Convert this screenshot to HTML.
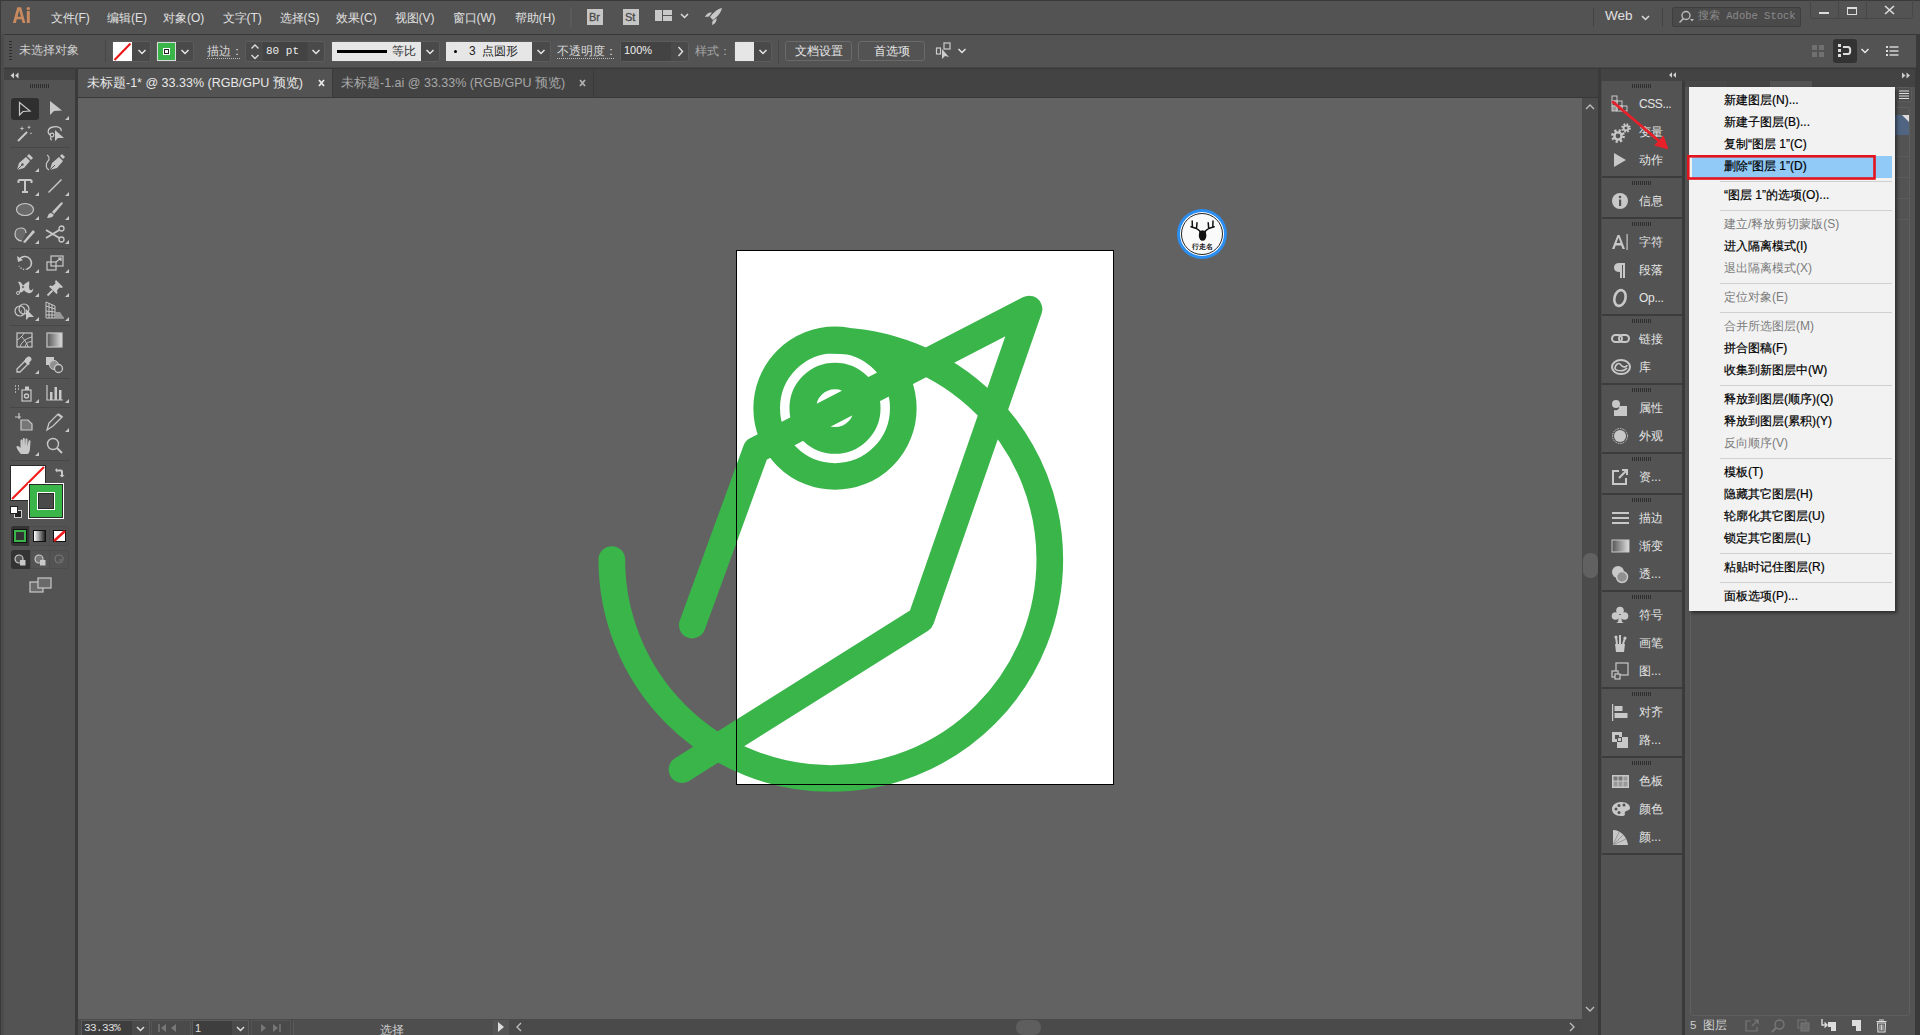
<!DOCTYPE html>
<html><head><meta charset="utf-8">
<style>
*{box-sizing:border-box;margin:0;padding:0}
html,body{width:1920px;height:1035px;overflow:hidden;background:#3a3a3a;font-family:"Liberation Sans",sans-serif;color:#dcdcdc;font-size:12px}
.a{position:absolute}
.t{position:absolute;white-space:nowrap;line-height:1}
svg{position:absolute;overflow:visible}
</style></head><body>
<!-- MENU BAR -->
<div class="a" style="left:0;top:0;width:1920px;height:34px;background:#535353;border-top:1px solid #3a3a3a;border-left:1px solid #3a3a3a"></div>
<div id="menubar">
<svg style="left:0;top:0" width="40" height="30"><path fill-rule="evenodd" fill="#c98a60" d="M12.9 23 L17.3 7.2 L21.1 7.2 L25.4 23 L22.6 23 L21.6 19.3 L16.8 19.3 L15.8 23Z M17.5 16.7 L20.9 16.7 L19.2 10.2Z"/><rect x="26.8" y="11" width="3" height="12" fill="#c98a60"/><circle cx="28.3" cy="8.6" r="1.7" fill="#c98a60"/></svg>
<div class="t" style="left:50.5px;top:12px;font-size:12px;color:#e0e0e0">文件(F)</div>
<div class="t" style="left:107px;top:12px;font-size:12px;color:#e0e0e0">编辑(E)</div>
<div class="t" style="left:163px;top:12px;font-size:12px;color:#e0e0e0">对象(O)</div>
<div class="t" style="left:222.5px;top:12px;font-size:12px;color:#e0e0e0">文字(T)</div>
<div class="t" style="left:279.5px;top:12px;font-size:12px;color:#e0e0e0">选择(S)</div>
<div class="t" style="left:336px;top:12px;font-size:12px;color:#e0e0e0">效果(C)</div>
<div class="t" style="left:394.5px;top:12px;font-size:12px;color:#e0e0e0">视图(V)</div>
<div class="t" style="left:452.5px;top:12px;font-size:12px;color:#e0e0e0">窗口(W)</div>
<div class="t" style="left:514.5px;top:12px;font-size:12px;color:#e0e0e0">帮助(H)</div>
<div class="a" style="left:570px;top:7px;width:2px;height:20px;background:#5a5a5a"></div>
<div class="a" style="left:587px;top:9px;width:16px;height:16px;background:#c6c6c6"></div><div class="t" style="left:589px;top:12px;font-size:11px;color:#4a4a4a;-webkit-text-stroke:0.3px #4a4a4a">Br</div>
<div class="a" style="left:623px;top:9px;width:16px;height:16px;background:#c6c6c6"></div><div class="t" style="left:625px;top:12px;font-size:11px;color:#4a4a4a;-webkit-text-stroke:0.3px #4a4a4a">St</div>
<div class="a" style="left:655px;top:10px;width:7px;height:11px;background:#c8c8c8"></div><div class="a" style="left:663px;top:10px;width:9px;height:5px;background:#c8c8c8"></div><div class="a" style="left:663px;top:16px;width:9px;height:5px;background:#c8c8c8"></div>
<svg style="left:680px;top:13px" width="9" height="6"><path d="M1 1 L4.5 4.5 L8 1" stroke="#ddd" stroke-width="1.5" fill="none"/></svg>
<svg style="left:703px;top:7px" width="22" height="20"><path d="M19 1 C14 2 10 6 7 10 L10 13 C14 10 18 6 19 1Z" fill="#c8c8c8"/><path d="M2 10 C3 7 6 5 9 5.5 L6 9.5Z" fill="#c8c8c8"/><path d="M9 18 C12 17 14 14 13.5 11 L9.5 14Z" fill="#c8c8c8"/></svg>
<div class="a" style="left:1593px;top:8px;width:1px;height:19px;background:#444"></div>
<div class="t" style="left:1605px;top:9px;font-size:13.5px;color:#e0e0e0">Web</div>
<svg style="left:1641px;top:15px" width="9" height="6"><path d="M1 1 L4.5 4.5 L8 1" stroke="#ddd" stroke-width="1.5" fill="none"/></svg>
<div class="a" style="left:1662px;top:8px;width:1px;height:19px;background:#444"></div>
<div class="a" style="left:1672px;top:7px;width:129px;height:20px;background:#4a4a4a;border:1px solid #3e3e3e;border-radius:2px"></div>
<svg style="left:1677px;top:9px" width="20" height="16"><circle cx="9" cy="6.5" r="4" stroke="#bbb" stroke-width="1.4" fill="none"/><path d="M6.5 9.5 L2.5 13.5" stroke="#bbb" stroke-width="1.6"/><path d="M13 10 L17 10 L15 12.5Z" fill="#bbb"/></svg>
<div class="t" style="left:1698px;top:11px;font-size:10.5px;color:#8a8a8a;font-family:'Liberation Mono',monospace">搜索 Adobe Stock</div>
<div class="a" style="left:1810px;top:-2px;width:103px;height:21px;border:1px solid #474747;border-radius:3px"></div>
<div class="a" style="left:1838px;top:0;width:1px;height:19px;background:#474747"></div>
<div class="a" style="left:1866px;top:0;width:1px;height:19px;background:#474747"></div>
<div class="a" style="left:1819px;top:12px;width:10px;height:2px;background:#ddd"></div>
<div class="a" style="left:1847px;top:7px;width:10px;height:8px;border:1px solid #ddd;border-top:2px solid #ddd"></div>
<svg style="left:1884px;top:5px" width="11" height="10"><path d="M1 1 L10 9 M10 1 L1 9" stroke="#ddd" stroke-width="1.6"/></svg>
</div>
<!-- CONTROL BAR -->
<div class="a" style="left:1px;top:34px;width:3px;height:1001px;background:#4c4c4c"></div>
<div class="a" style="left:4px;top:34px;width:1912px;height:34px;background:#535353;border-top:1px solid #383838"></div>
<div id="controlbar">
<div class="a" style="left:9px;top:41px;width:3px;height:20px;background:repeating-linear-gradient(#2e2e2e 0 1px,transparent 1px 3px)"></div>
<div class="t" style="left:19px;top:44px;font-size:12px;color:#cfcfcf">未选择对象</div>
<div class="a" style="left:105px;top:40px;width:1px;height:22px;background:#474747"></div>
<div class="a" style="left:112px;top:41px;width:39px;height:21px;background:#4a4a4a;border:1px solid #5c5c5c;border-radius:3px"></div>
<div class="a" style="left:113px;top:42px;width:19px;height:19px;background:#fff"></div>
<svg style="left:113px;top:42px" width="19" height="19"><path d="M1.5 18 L17.5 1.5" stroke="#e81313" stroke-width="2"/></svg>
<svg style="left:137px;top:49px" width="10" height="7"><path d="M1.5 1 L5 4.5 L8.5 1" stroke="#e6e6e6" stroke-width="1.5" fill="none"/></svg>
<div class="a" style="left:156px;top:41px;width:38px;height:21px;background:#4a4a4a;border:1px solid #5c5c5c;border-radius:3px"></div>
<div class="a" style="left:157px;top:42px;width:19px;height:19px;background:#39b54a;border:1px solid #d8d8d8"></div>
<div class="a" style="left:163px;top:48px;width:7px;height:7px;background:#fff"></div>
<div class="a" style="left:164px;top:49px;width:5px;height:5px;background:#fff;border:1px solid #222"></div>
<svg style="left:180px;top:49px" width="10" height="7"><path d="M1.5 1 L5 4.5 L8.5 1" stroke="#e6e6e6" stroke-width="1.5" fill="none"/></svg>
<div class="t" style="left:207px;top:45px;font-size:12px;color:#d6d6d6">描边：</div>
<div class="a" style="left:207px;top:58px;width:33px;height:1px;border-top:1px dotted #bbb"></div>
<div class="a" style="left:245px;top:41px;width:80px;height:21px;background:#4a4a4a;border:1px solid #5c5c5c;border-radius:3px"></div>
<div class="a" style="left:263px;top:42px;width:44px;height:19px;background:#434343"></div>
<div class="a" style="left:307px;top:42px;width:1px;height:19px;background:#474747"></div>
<svg style="left:250px;top:43px" width="10" height="18"><path d="M1.5 5.5 L5 2 L8.5 5.5 M1.5 12 L5 15.5 L8.5 12" stroke="#ddd" stroke-width="1.4" fill="none"/></svg>
<div class="t" style="left:266px;top:46px;font-size:11px;color:#eee;font-family:'Liberation Mono',monospace">80 pt</div>
<svg style="left:311px;top:49px" width="10" height="7"><path d="M1.5 1 L5 4.5 L8.5 1" stroke="#e6e6e6" stroke-width="1.5" fill="none"/></svg>
<div class="a" style="left:332px;top:41px;width:108px;height:21px;background:#4a4a4a;border:1px solid #5c5c5c;border-radius:3px"></div>
<div class="a" style="left:332px;top:42px;width:89px;height:19px;background:#e6e6e6"></div>
<div class="a" style="left:337px;top:50px;width:50px;height:3px;background:#000"></div>
<div class="t" style="left:392px;top:45px;font-size:12px;color:#333">等比</div>
<svg style="left:425px;top:49px" width="10" height="7"><path d="M1.5 1 L5 4.5 L8.5 1" stroke="#e6e6e6" stroke-width="1.5" fill="none"/></svg>
<div class="a" style="left:446px;top:41px;width:105px;height:21px;background:#4a4a4a;border:1px solid #5c5c5c;border-radius:3px"></div>
<div class="a" style="left:446px;top:42px;width:86px;height:19px;background:#e6e6e6"></div>
<div class="a" style="left:454px;top:50px;width:3px;height:3px;background:#000;border-radius:50%"></div>
<div class="t" style="left:469px;top:45px;font-size:12px;color:#222">3&nbsp;&nbsp;点圆形</div>
<svg style="left:536px;top:49px" width="10" height="7"><path d="M1.5 1 L5 4.5 L8.5 1" stroke="#e6e6e6" stroke-width="1.5" fill="none"/></svg>
<div class="t" style="left:557px;top:45px;font-size:12px;color:#d6d6d6">不透明度：</div>
<div class="a" style="left:557px;top:58px;width:57px;height:1px;border-top:1px dotted #bbb"></div>
<div class="a" style="left:620px;top:41px;width:69px;height:21px;background:#4a4a4a;border:1px solid #5c5c5c;border-radius:3px"></div>
<div class="a" style="left:621px;top:42px;width:50px;height:19px;background:#434343"></div>
<div class="t" style="left:624px;top:45px;font-size:11px;color:#eee">100%</div>
<svg style="left:677px;top:46px" width="7" height="11"><path d="M1.5 1 L5.5 5.5 L1.5 10" stroke="#ddd" stroke-width="1.5" fill="none"/></svg>
<div class="t" style="left:695px;top:45px;font-size:12px;color:#a8a8a8">样式：</div>
<div class="a" style="left:734px;top:41px;width:38px;height:21px;background:#4a4a4a;border:1px solid #5c5c5c;border-radius:3px"></div>
<div class="a" style="left:735px;top:42px;width:19px;height:19px;background:#e6e6e6"></div>
<svg style="left:758px;top:49px" width="10" height="7"><path d="M1.5 1 L5 4.5 L8.5 1" stroke="#e6e6e6" stroke-width="1.5" fill="none"/></svg>
<div class="a" style="left:778px;top:39px;width:1px;height:25px;background:#474747"></div>
<div class="a" style="left:785px;top:41px;width:67px;height:20px;border:1px solid #6a6a6a;border-radius:3px"></div>
<div class="t" style="left:795px;top:45px;font-size:12px;color:#e6e6e6">文档设置</div>
<div class="a" style="left:858px;top:41px;width:67px;height:20px;border:1px solid #6a6a6a;border-radius:3px"></div>
<div class="t" style="left:874px;top:45px;font-size:12px;color:#e6e6e6">首选项</div>
<svg style="left:935px;top:42px" width="18" height="18"><rect x="9" y="1" width="6" height="6" stroke="#ccc" stroke-width="1.2" fill="none"/><rect x="1.5" y="6" width="4" height="6" stroke="#ccc" stroke-width="1.2" fill="none"/><path d="M7 7 L7 17 L10 14 L14 15Z" fill="#ccc"/></svg>
<svg style="left:957px;top:48px" width="10" height="7"><path d="M1.5 1 L5 4.5 L8.5 1" stroke="#e6e6e6" stroke-width="1.5" fill="none"/></svg>
<svg style="left:1811px;top:44px" width="15" height="14"><rect x="1" y="1" width="5" height="5" fill="#707070"/><rect x="8" y="1" width="5" height="5" fill="#707070"/><rect x="1" y="8" width="5" height="5" fill="#707070"/><rect x="8" y="8" width="5" height="5" fill="#707070"/></svg>
<div class="a" style="left:1833px;top:39px;width:24px;height:24px;background:#333;border-radius:3px"></div>
<svg style="left:1838px;top:44px" width="16" height="14"><rect x="0" y="0" width="3" height="3" fill="#ddd"/><rect x="0" y="5" width="3" height="3" fill="#ddd"/><rect x="0" y="10" width="3" height="3" fill="#ddd"/><path d="M5 3 L10 3 C13 3 13 10 10 10 L5 10" stroke="#ddd" stroke-width="2" fill="none"/></svg>
<svg style="left:1860px;top:48px" width="10" height="7"><path d="M1.5 1 L5 4.5 L8.5 1" stroke="#e6e6e6" stroke-width="1.5" fill="none"/></svg>
<svg style="left:1886px;top:46px" width="13" height="10"><rect x="0" y="0" width="2" height="2" fill="#ddd"/><rect x="0" y="4" width="2" height="2" fill="#ddd"/><rect x="0" y="8" width="2" height="2" fill="#ddd"/><rect x="3.5" y="0.3" width="9" height="1.4" fill="#ddd"/><rect x="3.5" y="4.3" width="9" height="1.4" fill="#ddd"/><rect x="3.5" y="8.3" width="9" height="1.4" fill="#ddd"/></svg>
</div>
<!-- LEFT TOOLS -->
<div class="a" style="left:4px;top:68px;width:71px;height:967px;background:#535353"></div>
<div class="a" style="left:4px;top:68px;width:71px;height:12px;background:#434343"></div>
<div class="a" style="left:75px;top:68px;width:3px;height:967px;background:#3a3a3a"></div>
<div id="tools">
<div class="a" style="left:23px;top:73px;width:0;height:0"></div><svg style="left:10px;top:72px" width="10" height="7"><path d="M4 0.5 L0.5 3.5 L4 6.5Z M8.5 0.5 L5 3.5 L8.5 6.5Z" fill="#d0d0d0"/></svg>
<div class="a" style="left:30px;top:84px;width:19px;height:4px;background:repeating-linear-gradient(90deg,#2e2e2e 0 1px,transparent 1px 2px)"></div>
<div class="a" style="left:11px;top:98px;width:28px;height:22px;background:#2f2f2f;border-radius:3px"></div>
<svg style="left:18px;top:101px" width="14" height="16"><path d="M1.5 1.5 L1.5 14 L5 10.5 L12 10Z" stroke="#c8c8c8" stroke-width="1.2" fill="none" stroke-linejoin="miter"/></svg>
<svg style="left:49px;top:100px" width="14" height="16"><path d="M1 1 L1 15 L5 11 L13 10.5Z" fill="#c8c8c8"/></svg>
<svg style="left:65px;top:116px" width="4" height="4"><path d="M4 0 L4 4 L0 4Z" fill="#c8c8c8"/></svg>
<svg style="left:16px;top:124px" width="18" height="18"><path d="M2 17 L11 8" stroke="#c8c8c8" stroke-width="2"/><path d="M6 2 L6.6 4 L8.5 4.5 L6.6 5 L6 7 L5.4 5 L3.5 4.5 L5.4 4Z M13 1 L13.5 2.8 L15 3.3 L13.5 3.8 L13 5.5 L12.5 3.8 L11 3.3 L12.5 2.8Z M15 8 L15.4 9 L16.5 9.3 L15.4 9.6 L15 10.6 L14.6 9.6 L13.5 9.3 L14.6 9Z" fill="#c8c8c8"/></svg>
<svg style="left:46px;top:125px" width="19" height="17"><path d="M5 10 C1 9 1 3 7 2 C12 1 16 3 15 6" stroke="#c8c8c8" stroke-width="1.3" fill="none"/><circle cx="6" cy="10" r="1.8" stroke="#c8c8c8" stroke-width="1.2" fill="none"/><path d="M5 12 C4 14 5 15 6 15" stroke="#c8c8c8" stroke-width="1.2" fill="none"/><path d="M9 5 L9 16 L12 13 L18 13Z" fill="#c8c8c8"/></svg>
<div class="a" style="left:10px;top:147px;width:60px;height:1px;background:#474747"></div>
<svg style="left:16px;top:153px" width="18" height="18"><path d="M1 17 L3 10 L10 4 L14 8 L8 15Z" fill="#c8c8c8"/><path d="M11 3 L13 1 L17 5 L15 7Z" fill="#c8c8c8"/><path d="M1 17 L6 12" stroke="#555" stroke-width="1"/><circle cx="6.5" cy="11.5" r="1.2" fill="#555"/></svg>
<svg style="left:35px;top:168px" width="4" height="4"><path d="M4 0 L4 4 L0 4Z" fill="#c8c8c8"/></svg>
<svg style="left:45px;top:153px" width="20" height="18"><path d="M5 17 L7 10 L14 4 L18 8 L12 15Z" fill="#c8c8c8"/><path d="M15 3 L17 1 L20 4 L18 6Z" fill="#c8c8c8"/><path d="M5 17 L10 12" stroke="#555" stroke-width="1"/><path d="M4 17 C0 15 1 10 3 8 C5 6 4 3 2 2" stroke="#c8c8c8" stroke-width="1.1" fill="none"/></svg>
<svg style="left:17px;top:178px" width="16" height="16"><path d="M1.5 2 L14.5 2 M8 2 L8 14 M5 14 L11 14 M1.5 2 L1.5 5 M14.5 2 L14.5 5" stroke="#c8c8c8" stroke-width="2" fill="none"/></svg>
<svg style="left:35px;top:192px" width="4" height="4"><path d="M4 0 L4 4 L0 4Z" fill="#c8c8c8"/></svg>
<svg style="left:47px;top:178px" width="16" height="16"><path d="M1.5 14.5 L14.5 1.5" stroke="#c8c8c8" stroke-width="1.4"/></svg>
<svg style="left:65px;top:192px" width="4" height="4"><path d="M4 0 L4 4 L0 4Z" fill="#c8c8c8"/></svg>
<svg style="left:15px;top:202px" width="20" height="15"><ellipse cx="10" cy="7.5" rx="8.5" ry="6" stroke="#c8c8c8" stroke-width="1.2" fill="#6a6a6a"/></svg>
<svg style="left:35px;top:216px" width="4" height="4"><path d="M4 0 L4 4 L0 4Z" fill="#c8c8c8"/></svg>
<svg style="left:46px;top:201px" width="18" height="18"><path d="M6 11 L15 1.5 C16.5 1 17 1.5 16.5 3 L8 13Z" fill="#c8c8c8"/><path d="M5 12 C2 12 2 16 1 17 C4 17 8 16 7.5 13.5Z" fill="#c8c8c8"/></svg>
<svg style="left:65px;top:216px" width="4" height="4"><path d="M4 0 L4 4 L0 4Z" fill="#c8c8c8"/></svg>
<svg style="left:14px;top:225px" width="22" height="18"><path d="M8 16 C4 16 1 13 1 9 C1 5 4 3 7 3 C10 3 12 5 12 8" stroke="#c8c8c8" stroke-width="1.2" fill="#6a6a6a"/><path d="M9 17 L19 5 L21 7 L11 18Z" fill="#c8c8c8"/></svg>
<svg style="left:35px;top:240px" width="4" height="4"><path d="M4 0 L4 4 L0 4Z" fill="#c8c8c8"/></svg>
<svg style="left:45px;top:225px" width="20" height="18"><path d="M1 5 L16 14 M1 13 L16 4" stroke="#c8c8c8" stroke-width="1.8"/><circle cx="16.5" cy="3.5" r="2.5" stroke="#c8c8c8" stroke-width="1.3" fill="#555"/><circle cx="16.5" cy="14.5" r="2.5" stroke="#c8c8c8" stroke-width="1.3" fill="#555"/></svg>
<svg style="left:65px;top:240px" width="4" height="4"><path d="M4 0 L4 4 L0 4Z" fill="#c8c8c8"/></svg>
<div class="a" style="left:10px;top:248px;width:60px;height:1px;background:#474747"></div>
<svg style="left:16px;top:254px" width="18" height="18"><path d="M3 6 C5 2 11 1 14 5 C17 9 15 14 11 15" stroke="#c8c8c8" stroke-width="1.5" fill="none"/><path d="M11 15 C8 16 5 15 3 12" stroke="#c8c8c8" stroke-width="1.3" fill="none" stroke-dasharray="1.3 1.5"/><path d="M1 2 L2 8 L7 6Z" fill="#c8c8c8"/></svg>
<svg style="left:35px;top:269px" width="4" height="4"><path d="M4 0 L4 4 L0 4Z" fill="#c8c8c8"/></svg>
<svg style="left:46px;top:254px" width="18" height="17"><rect x="1" y="8" width="9" height="8" stroke="#c8c8c8" stroke-width="1.2" fill="none"/><rect x="5" y="2" width="12" height="10" stroke="#c8c8c8" stroke-width="1.2" fill="none"/><path d="M10 8 L15 4 M12 4 L15 4 L15 7" stroke="#c8c8c8" stroke-width="1.2" fill="none"/></svg>
<svg style="left:65px;top:269px" width="4" height="4"><path d="M4 0 L4 4 L0 4Z" fill="#c8c8c8"/></svg>
<svg style="left:15px;top:278px" width="20" height="17"><path d="M4 14 C6 10 5 7 3 4 C5 3 7 5 8 8 C11 4 12 5 14 3 C15 6 13 9 15 12 C17 13 18 11 18 10 C19 13 16 16 13 15 C10 14 9 12 9 12 C8 14 6 15 4 14Z" fill="#c8c8c8"/><circle cx="3" cy="15" r="1.5" stroke="#c8c8c8" fill="#555"/><circle cx="8" cy="9" r="1.5" stroke="#c8c8c8" fill="#555"/></svg>
<svg style="left:35px;top:293px" width="4" height="4"><path d="M4 0 L4 4 L0 4Z" fill="#c8c8c8"/></svg>
<svg style="left:46px;top:279px" width="18" height="17"><path d="M10 1 L17 8 L15.5 9 L13.5 8.5 L11 11.5 L11.5 14 L10.5 15 L3 7.5 L4 6.5 L6.5 7 L9.5 4.5 L9 2.5Z" fill="#c8c8c8"/><path d="M6.5 11.5 L1.5 16.5" stroke="#c8c8c8" stroke-width="1.8"/></svg>
<svg style="left:65px;top:293px" width="4" height="4"><path d="M4 0 L4 4 L0 4Z" fill="#c8c8c8"/></svg>
<svg style="left:14px;top:302px" width="22" height="18"><circle cx="6" cy="9" r="5" stroke="#c8c8c8" stroke-width="1.2" fill="none"/><circle cx="10" cy="7" r="5" stroke="#c8c8c8" stroke-width="1.2" fill="none"/><path d="M5 9 L9 9" stroke="#c8c8c8" stroke-dasharray="1 1"/><path d="M12 7 L12 18 L15 15 L20 15Z" fill="#c8c8c8"/></svg>
<svg style="left:35px;top:317px" width="4" height="4"><path d="M4 0 L4 4 L0 4Z" fill="#c8c8c8"/></svg>
<svg style="left:45px;top:301px" width="20" height="18"><path d="M1 1 L1 17 L19 17 M1 1 L10 5 L10 17 M1 5 L10 8 M1 10 L10 11 M1 14 L10 14 M4 2 L4 17 M7 3.5 L7 17" stroke="#c8c8c8" stroke-width="1" fill="none"/><path d="M10 11 L15 11 L19 17 L10 17Z" fill="#9a9a9a"/></svg>
<svg style="left:65px;top:317px" width="4" height="4"><path d="M4 0 L4 4 L0 4Z" fill="#c8c8c8"/></svg>
<div class="a" style="left:10px;top:325px;width:60px;height:1px;background:#474747"></div>
<svg style="left:16px;top:332px" width="17" height="16"><rect x="1" y="1" width="15" height="14" stroke="#c8c8c8" stroke-width="1.2" fill="none"/><path d="M1 8 C5 6 8 2 8 1 M4 15 C5 10 11 6 16 5 M9 15 C10 11 13 9 16 10 M5 4 C8 7 11 11 12 15" stroke="#c8c8c8" stroke-width="1" fill="none"/></svg>
<svg style="left:46px;top:332px" width="17" height="16"><defs><linearGradient id="g1"><stop offset="0" stop-color="#555"/><stop offset="1" stop-color="#ddd"/></linearGradient></defs><rect x="1" y="1" width="15" height="14" stroke="#c8c8c8" stroke-width="1.2" fill="url(#g1)"/></svg>
<svg style="left:15px;top:356px" width="18" height="18"><path d="M2 16 L2 13 L10 5 L13 8 L5 16Z" stroke="#c8c8c8" stroke-width="1.3" fill="none"/><path d="M10 3 L13 0.5 C15 0 17 2 16.5 4 L14 7 L15 8 L13 9 L9 5 L10 4Z" fill="#c8c8c8"/></svg>
<svg style="left:35px;top:370px" width="4" height="4"><path d="M4 0 L4 4 L0 4Z" fill="#c8c8c8"/></svg>
<svg style="left:45px;top:356px" width="19" height="18"><rect x="1" y="1" width="8" height="8" fill="#c8c8c8"/><circle cx="9" cy="9" r="4.5" fill="#909090" stroke="#c8c8c8" stroke-width="1"/><circle cx="13.5" cy="12.5" r="4" stroke="#c8c8c8" stroke-width="1.3" fill="#555"/></svg>
<div class="a" style="left:10px;top:378px;width:60px;height:1px;background:#474747"></div>
<svg style="left:14px;top:385px" width="20" height="16"><path d="M1 1 L2 1 M4 1 L5 1 M1 4 L2 4 M4 4 L5 4 M1 7 L2 7" stroke="#c8c8c8" stroke-width="1.6"/><rect x="8" y="5" width="9" height="11" stroke="#c8c8c8" stroke-width="1.2" fill="none"/><rect x="11" y="1.5" width="4" height="3.5" fill="#c8c8c8"/><circle cx="12.5" cy="11" r="2" stroke="#c8c8c8" stroke-width="1.4" fill="none"/></svg>
<svg style="left:35px;top:399px" width="4" height="4"><path d="M4 0 L4 4 L0 4Z" fill="#c8c8c8"/></svg>
<svg style="left:46px;top:385px" width="18" height="16"><path d="M1 0 L1 15 L17 15" stroke="#c8c8c8" stroke-width="1.2" fill="none"/><rect x="4" y="7" width="2.5" height="8" fill="#c8c8c8"/><rect x="8.5" y="2" width="2.5" height="13" fill="#c8c8c8"/><rect x="13" y="5" width="2.5" height="10" fill="#c8c8c8"/></svg>
<svg style="left:65px;top:399px" width="4" height="4"><path d="M4 0 L4 4 L0 4Z" fill="#c8c8c8"/></svg>
<div class="a" style="left:10px;top:407px;width:60px;height:1px;background:#474747"></div>
<svg style="left:15px;top:413px" width="19" height="18"><path d="M4 0 L4 6 M0 4 L6 4" stroke="#c8c8c8" stroke-width="1.2"/><path d="M6 7 L13 7 L17 11 L17 17 L6 17Z" stroke="#c8c8c8" stroke-width="1.2" fill="#777"/></svg>
<svg style="left:46px;top:413px" width="18" height="18"><path d="M1 17 L3 10 L12 1 L16 4 L7 13Z" stroke="#c8c8c8" stroke-width="1.3" fill="none"/><path d="M11 2 L13 0.5 L17 3.5 L15.5 5Z" fill="#c8c8c8"/></svg>
<svg style="left:65px;top:428px" width="4" height="4"><path d="M4 0 L4 4 L0 4Z" fill="#c8c8c8"/></svg>
<svg style="left:16px;top:437px" width="18" height="18"><path d="M5 17 C3 15 0.5 11 0.5 10 C0.5 9 2 8.5 3 9.5 L4.5 11 L4.5 3.5 C4.5 2.3 6.5 2.3 6.5 3.5 L6.5 9 L6.8 2 C6.8 0.8 8.8 0.8 8.8 2 L9 9 L9.5 2.5 C9.5 1.3 11.5 1.3 11.5 2.5 L11.5 9.5 L12.5 4 C12.7 2.8 14.5 3 14.5 4.2 L14 11 C14 14 13 16 12 17Z" fill="#c8c8c8"/></svg>
<svg style="left:35px;top:452px" width="4" height="4"><path d="M4 0 L4 4 L0 4Z" fill="#c8c8c8"/></svg>
<svg style="left:46px;top:437px" width="17" height="18"><circle cx="7" cy="7" r="5.5" stroke="#c8c8c8" stroke-width="1.4" fill="none"/><path d="M11 11 L16 16" stroke="#c8c8c8" stroke-width="2"/></svg>
<div class="a" style="left:10px;top:460px;width:60px;height:1px;background:#474747"></div>
<div class="a" style="left:10px;top:465px;width:36px;height:36px;background:#fff;border:1px solid #2a2a2a"></div>
<svg style="left:11px;top:466px" width="34" height="34"><path d="M1 33 L33 1" stroke="#f21a1a" stroke-width="2.2"/></svg>
<div class="a" style="left:28px;top:483px;width:36px;height:36px;background:#fff;padding:1px"><div style="width:34px;height:34px;background:#39b54a;border:1px solid #2a2a2a;position:relative"><div style="position:absolute;left:7px;top:7px;width:18px;height:18px;border:1px solid #fff;background:#2a2a2a"><div style="margin:1px;width:14px;height:14px;background:#4a4a4a"></div></div></div></div>
<svg style="left:54px;top:467px" width="11" height="11"><path d="M1 3 L3 1 L3 2.5 L7 2.5 C8.5 2.5 9 3.5 9 5 L9 8 L10.5 8 L8 10.5 L5.5 8 L7 8 L7 5 C7 4.5 6.8 4.5 6 4.5 L3 4.5 L3 5.5Z" fill="#c8c8c8"/></svg>
<div class="a" style="left:10px;top:506px;width:12px;height:12px"><div class="a" style="left:4px;top:4px;width:8px;height:8px;background:#222;border:1px solid #ccc"></div><div class="a" style="left:0;top:0;width:8px;height:8px;background:#fff;border:1px solid #222"></div></div>
<div class="a" style="left:11px;top:526px;width:58px;height:20px;border:1px solid #4c4c4c;border-radius:3px"></div>
<div class="a" style="left:11px;top:526px;width:18px;height:20px;background:#333;border-radius:3px 0 0 3px"></div>
<div class="a" style="left:29px;top:527px;width:1px;height:18px;background:#4c4c4c"></div><div class="a" style="left:49px;top:527px;width:1px;height:18px;background:#4c4c4c"></div>
<div class="a" style="left:14px;top:530px;width:12px;height:12px;border:2px solid #39b54a;background:#333;outline:1px solid #111"></div>
<div class="a" style="left:33px;top:530px;width:13px;height:12px;background:linear-gradient(90deg,#fff,#222);border:1px solid #111"></div>
<div class="a" style="left:53px;top:530px;width:13px;height:12px;background:#fff;border:1px solid #111;overflow:hidden"></div><svg style="left:54px;top:531px" width="11" height="10"><path d="M0 10 L11 0" stroke="#f21a1a" stroke-width="2.5"/></svg>
<div class="a" style="left:11px;top:550px;width:58px;height:19px;border:1px solid #4c4c4c;border-radius:3px"></div>
<div class="a" style="left:11px;top:550px;width:19px;height:19px;background:#333;border-radius:3px 0 0 3px"></div>
<div class="a" style="left:30px;top:551px;width:1px;height:17px;background:#4c4c4c"></div><div class="a" style="left:49px;top:551px;width:1px;height:17px;background:#4c4c4c"></div>
<svg style="left:14px;top:554px" width="12" height="12"><circle cx="5" cy="5" r="4" stroke="#c8c8c8" stroke-width="1.2" fill="#555"/><rect x="6" y="6" width="5.5" height="5.5" fill="#c8c8c8"/></svg>
<svg style="left:34px;top:554px" width="12" height="12"><circle cx="5" cy="5" r="4" stroke="#c8c8c8" stroke-width="1.2" fill="#777"/><rect x="6" y="6" width="5.5" height="5.5" fill="#c8c8c8"/></svg>
<svg style="left:54px;top:554px" width="10" height="10"><circle cx="5" cy="5" r="4" stroke="#777" stroke-width="1.2" fill="none"/><path d="M5 5 L9 5 L9 9 L5 9Z" fill="#666"/></svg>
<svg style="left:29px;top:577px" width="23" height="17"><rect x="1" y="5" width="13" height="10" stroke="#c8c8c8" stroke-width="1.2" fill="#6a6a6a"/><rect x="9" y="1" width="13" height="10" stroke="#c8c8c8" stroke-width="1.2" fill="#6a6a6a"/></svg>
</div>
<!-- DOC TABS -->
<div class="a" style="left:78px;top:68px;width:1520px;height:29px;background:#434343"></div>
<div class="a" style="left:78px;top:69px;width:254px;height:28px;background:#535353"></div>
<div class="a" style="left:78px;top:97px;width:1520px;height:1px;background:#383838"></div>
<div id="tabs">
<div class="t" style="left:87px;top:77px;font-size:12.5px;color:#e8e8e8">未标题-1* @ 33.33% (RGB/GPU 预览)</div>
<svg style="left:318px;top:79px" width="7" height="8"><path d="M1 1 L6 7 M6 1 L1 7" stroke="#e8e8e8" stroke-width="1.8"/></svg>
<div class="a" style="left:332px;top:69px;width:1px;height:28px;background:#3a3a3a"></div>
<div class="t" style="left:341px;top:77px;font-size:12.5px;color:#a8a8a8">未标题-1.ai @ 33.33% (RGB/GPU 预览)</div>
<svg style="left:579px;top:79px" width="7" height="8"><path d="M1 1 L6 7 M6 1 L1 7" stroke="#b0b0b0" stroke-width="1.8"/></svg>
<div class="a" style="left:593px;top:69px;width:1px;height:28px;background:#3a3a3a"></div>
</div>
<!-- CANVAS -->
<div class="a" style="left:78px;top:98px;width:1504px;height:921px;background:#626262"></div>
<div class="a" style="left:1582px;top:98px;width:16px;height:921px;background:#4b4b4b"></div>
<div class="a" style="left:78px;top:1019px;width:1520px;height:16px;background:#4a4a4a"></div>
<div id="canvas">
<svg style="left:1585px;top:103px" width="10" height="7"><path d="M1 6 L5 2 L9 6" stroke="#bbb" stroke-width="1.4" fill="none"/></svg>
<div class="a" style="left:1583px;top:553px;width:15px;height:25px;background:#616161;border-radius:7px"></div>
<svg style="left:1585px;top:1006px" width="10" height="7"><path d="M1 1 L5 5 L9 1" stroke="#bbb" stroke-width="1.4" fill="none"/></svg>
<div class="a" style="left:81px;top:1020px;width:69px;height:15px;background:#4a4a4a;border:1px solid #5a5a5a;border-bottom:none"></div>
<div class="a" style="left:82px;top:1021px;width:50px;height:14px;background:#3e3e3e"></div>
<div class="t" style="left:84px;top:1023px;font-size:11px;color:#e0e0e0;font-family:'Liberation Mono',monospace;letter-spacing:-0.6px">33.33%</div>
<svg style="left:136px;top:1026px" width="9" height="6"><path d="M1 1 L4.5 4.5 L8 1" stroke="#ddd" stroke-width="1.5" fill="none"/></svg>
<div class="a" style="left:151px;top:1020px;width:40px;height:15px;border:1px solid #555;border-bottom:none"></div>
<svg style="left:158px;top:1024px" width="28" height="9"><path d="M1 0 L1 8" stroke="#777" stroke-width="1.5"/><path d="M8 0 L3 4 L8 8Z M18 0 L13 4 L18 8Z" fill="#777"/></svg>
<div class="a" style="left:192px;top:1020px;width:57px;height:15px;background:#4a4a4a;border:1px solid #5a5a5a;border-bottom:none"></div>
<div class="a" style="left:193px;top:1021px;width:39px;height:14px;background:#3e3e3e"></div>
<div class="t" style="left:195px;top:1023px;font-size:11px;color:#e0e0e0">1</div>
<svg style="left:236px;top:1026px" width="9" height="6"><path d="M1 1 L4.5 4.5 L8 1" stroke="#ddd" stroke-width="1.5" fill="none"/></svg>
<div class="a" style="left:251px;top:1020px;width:40px;height:15px;border:1px solid #555;border-bottom:none"></div>
<svg style="left:258px;top:1024px" width="28" height="9"><path d="M3 0 L8 4 L3 8Z M15 0 L20 4 L15 8Z" fill="#777"/><path d="M22 0 L22 8" stroke="#777" stroke-width="1.5"/></svg>
<div class="a" style="left:293px;top:1020px;width:200px;height:15px;background:#4e4e4e;border-left:1px solid #5a5a5a"></div>
<div class="t" style="left:380px;top:1024px;font-size:12px;color:#cfcfcf">选择</div>
<div class="a" style="left:493px;top:1020px;width:16px;height:15px;background:#555"></div>
<svg style="left:497px;top:1022px" width="8" height="10"><path d="M1 0 L7 5 L1 10Z" fill="#ddd"/></svg>
<svg style="left:515px;top:1022px" width="7" height="10"><path d="M6 1 L2 5 L6 9" stroke="#bbb" stroke-width="1.4" fill="none"/></svg>
<div class="a" style="left:1016px;top:1020px;width:25px;height:15px;background:#5e5e5e;border-radius:7px"></div>
<svg style="left:1569px;top:1022px" width="7" height="10"><path d="M1 1 L5 5 L1 9" stroke="#bbb" stroke-width="1.4" fill="none"/></svg>
<div class="a" style="left:1582px;top:1019px;width:16px;height:16px;background:#4b4b4b"></div>
<!-- deer logo -->
<div class="a" style="left:1177px;top:209px;width:50px;height:50px;border-radius:50%;background:#2b8ef0"></div>
<div class="a" style="left:1180px;top:212px;width:44px;height:44px;border-radius:50%;background:#fff"></div>
<div class="a" style="left:1181px;top:213px;width:42px;height:42px;border-radius:50%;border:1.5px solid #222;background:#fafafa"></div>
<svg style="left:1188px;top:219px" width="28" height="32"><ellipse cx="14.6" cy="16.5" rx="3.8" ry="5.2" fill="#111"/><path d="M12.5 12.5 L8.5 9.5 L3 7.8 M4.4 8.2 L4.2 2 M8.5 9.5 L9 3.8 M16.7 12.5 L20.7 9.5 L26.2 7.8 M24.8 8.2 L25 2 M20.7 9.5 L20.2 3.8" stroke="#111" stroke-width="1.5" fill="none" stroke-linecap="round"/><path d="M11 12 L18.2 12 L17.5 15 L11.7 15Z" fill="#111"/><text x="14.6" y="30" font-size="6.5" text-anchor="middle" fill="#111" font-weight="bold">行走名</text></svg>
<div class="a" style="left:737px;top:251px;width:376px;height:533px;background:#fff"></div>
<svg width="1920" height="1035" style="left:0;top:0">
<path fill="none" stroke="#39b54a" stroke-width="26.67" stroke-linecap="round" stroke-linejoin="round" d="M611.8 559.5 A219 219 0 1 0 830.8 340.5 M766.7 408.2 A68.3 68.3 0 1 0 903.3 408.2 A68.3 68.3 0 1 0 766.7 408.2Z M802.8 408.2 A32.2 32.2 0 1 0 867.2 408.2 A32.2 32.2 0 1 0 802.8 408.2Z M692.3 625 L756.1 450.1 L1029 309 L921 619.4 L682 769.6"/>
</svg>
<div class="a" style="left:736px;top:250px;width:378px;height:535px;border:1px solid #000"></div>
</div>
<!-- RIGHT ICON PANEL -->
<div class="a" style="left:1598px;top:68px;width:3px;height:967px;background:#3a3a3a"></div>
<div class="a" style="left:1601px;top:68px;width:314px;height:13px;background:#434343"></div>
<div class="a" style="left:1601px;top:81px;width:81px;height:954px;background:#535353"></div>
<div class="a" style="left:1682px;top:81px;width:3px;height:954px;background:#3a3a3a"></div>
<div id="iconpanel">
<div class="a" style="left:1632px;top:84px;width:19px;height:4px;background:repeating-linear-gradient(90deg,#2e2e2e 0 1px,transparent 1px 2px)"></div>
<svg style="left:1611px;top:95px" width="20" height="19"><rect x="1" y="1" width="5" height="5" fill="none" stroke="#c8c8c8"/><rect x="1" y="6" width="5" height="5" fill="none" stroke="#c8c8c8"/><rect x="6" y="6" width="5" height="5" fill="none" stroke="#c8c8c8"/><rect x="1" y="11" width="5" height="5" fill="#999" stroke="#c8c8c8"/><rect x="6" y="11" width="5" height="5" fill="none" stroke="#c8c8c8"/><rect x="11" y="11" width="5" height="5" fill="none" stroke="#c8c8c8"/></svg>
<div class="t" style="left:1639px;top:98px;font-size:12px;color:#e4e4e4;letter-spacing:-0.4px">CSS...</div>
<svg style="left:1611px;top:123px" width="20" height="19"><circle cx="7" cy="13" r="5.6" fill="none" stroke="#c8c8c8" stroke-width="2.6" stroke-dasharray="2.2 2.2"/><circle cx="7" cy="13" r="3.6" fill="none" stroke="#c8c8c8" stroke-width="2.4"/><circle cx="15" cy="5" r="3.8" fill="none" stroke="#c8c8c8" stroke-width="2" stroke-dasharray="1.6 1.4"/><circle cx="15" cy="5" r="2.4" fill="none" stroke="#c8c8c8" stroke-width="1.8"/></svg>
<div class="t" style="left:1639px;top:126px;font-size:12px;color:#e4e4e4">变量</div>
<svg style="left:1611px;top:151px" width="20" height="19"><path d="M3 2 L15 9 L3 16Z" fill="#c8c8c8"/></svg>
<div class="t" style="left:1639px;top:154px;font-size:12px;color:#e4e4e4">动作</div>
<div class="a" style="left:1601px;top:176px;width:81px;height:2px;background:#3c3c3c"></div>
<div class="a" style="left:1632px;top:181px;width:19px;height:4px;background:repeating-linear-gradient(90deg,#2e2e2e 0 1px,transparent 1px 2px)"></div>
<svg style="left:1611px;top:192px" width="20" height="19"><circle cx="9" cy="9" r="8" fill="#c8c8c8"/><rect x="8" y="7.5" width="2.2" height="6.5" fill="#535353"/><circle cx="9" cy="5" r="1.3" fill="#535353"/></svg>
<div class="t" style="left:1639px;top:195px;font-size:12px;color:#e4e4e4">信息</div>
<div class="a" style="left:1601px;top:217px;width:81px;height:2px;background:#3c3c3c"></div>
<div class="a" style="left:1632px;top:222px;width:19px;height:4px;background:repeating-linear-gradient(90deg,#2e2e2e 0 1px,transparent 1px 2px)"></div>
<svg style="left:1611px;top:233px" width="20" height="19"><path d="M1 16 L6.5 2 L8.5 2 L14 16 L11.5 16 L10.3 12.5 L4.7 12.5 L3.5 16Z M5.5 10 L9.5 10 L7.5 4.5Z" fill="#c8c8c8" fill-rule="evenodd"/><rect x="15.5" y="1" width="1.2" height="16" fill="#c8c8c8"/></svg>
<div class="t" style="left:1639px;top:236px;font-size:12px;color:#e4e4e4">字符</div>
<svg style="left:1611px;top:261px" width="20" height="19"><path d="M8 2 L14 2 L14 17 L12 17 L12 4 L11 4 L11 17 L9 17 L9 11 C5 11 3 9.5 3 6.5 C3 3.5 5 2 8 2Z" fill="#c8c8c8"/></svg>
<div class="t" style="left:1639px;top:264px;font-size:12px;color:#e4e4e4">段落</div>
<svg style="left:1611px;top:289px" width="20" height="19"><ellipse cx="9" cy="9" rx="5.5" ry="8" fill="none" stroke="#c8c8c8" stroke-width="2.6" transform="rotate(15 9 9)"/></svg>
<div class="t" style="left:1639px;top:292px;font-size:12px;color:#e4e4e4;letter-spacing:-0.3px">Op...</div>
<div class="a" style="left:1601px;top:314px;width:81px;height:2px;background:#3c3c3c"></div>
<div class="a" style="left:1632px;top:319px;width:19px;height:4px;background:repeating-linear-gradient(90deg,#2e2e2e 0 1px,transparent 1px 2px)"></div>
<svg style="left:1611px;top:330px" width="20" height="19"><rect x="1" y="5" width="10" height="7" rx="3.5" fill="none" stroke="#c8c8c8" stroke-width="2"/><rect x="8" y="5" width="10" height="7" rx="3.5" fill="none" stroke="#c8c8c8" stroke-width="2"/></svg>
<div class="t" style="left:1639px;top:333px;font-size:12px;color:#e4e4e4">链接</div>
<svg style="left:1611px;top:358px" width="20" height="19"><ellipse cx="10" cy="9" rx="9" ry="7" fill="none" stroke="#c8c8c8" stroke-width="2"/><path d="M4 11 C4 6 8 4 10 7 C12 10 16 9 16 7 M4 11 C6 13 13 14 16 10" stroke="#c8c8c8" stroke-width="1.6" fill="none"/></svg>
<div class="t" style="left:1639px;top:361px;font-size:12px;color:#e4e4e4">库</div>
<div class="a" style="left:1601px;top:383px;width:81px;height:2px;background:#3c3c3c"></div>
<div class="a" style="left:1632px;top:388px;width:19px;height:4px;background:repeating-linear-gradient(90deg,#2e2e2e 0 1px,transparent 1px 2px)"></div>
<svg style="left:1611px;top:399px" width="20" height="19"><path d="M6 7 L16 7 L16 17 L3 17 L3 11 C6 12 9 10 8 7Z" fill="#c8c8c8"/><circle cx="5" cy="5" r="4" fill="#c8c8c8"/></svg>
<div class="t" style="left:1639px;top:402px;font-size:12px;color:#e4e4e4">属性</div>
<svg style="left:1611px;top:427px" width="20" height="19"><circle cx="9" cy="9" r="7.5" fill="none" stroke="#c8c8c8" stroke-width="1" stroke-dasharray="1.5 1"/><circle cx="9" cy="9" r="6" fill="#c8c8c8"/></svg>
<div class="t" style="left:1639px;top:430px;font-size:12px;color:#e4e4e4">外观</div>
<div class="a" style="left:1601px;top:452px;width:81px;height:2px;background:#3c3c3c"></div>
<div class="a" style="left:1632px;top:457px;width:19px;height:4px;background:repeating-linear-gradient(90deg,#2e2e2e 0 1px,transparent 1px 2px)"></div>
<svg style="left:1611px;top:468px" width="20" height="19"><path d="M8 3 L2 3 L2 16 L15 16 L15 10" stroke="#c8c8c8" stroke-width="2" fill="none"/><path d="M8 10 L16 2 M11 2 L16 2 L16 7" stroke="#c8c8c8" stroke-width="2" fill="none"/></svg>
<div class="t" style="left:1639px;top:471px;font-size:12px;color:#e4e4e4">资...</div>
<div class="a" style="left:1601px;top:493px;width:81px;height:2px;background:#3c3c3c"></div>
<div class="a" style="left:1632px;top:498px;width:19px;height:4px;background:repeating-linear-gradient(90deg,#2e2e2e 0 1px,transparent 1px 2px)"></div>
<svg style="left:1611px;top:509px" width="20" height="19"><rect x="1" y="3" width="17" height="2" fill="#c8c8c8"/><rect x="1" y="8" width="17" height="2" fill="#c8c8c8"/><rect x="1" y="13" width="17" height="2" fill="#c8c8c8"/></svg>
<div class="t" style="left:1639px;top:512px;font-size:12px;color:#e4e4e4">描边</div>
<svg style="left:1611px;top:537px" width="20" height="19"><defs><linearGradient id="g2"><stop offset="0" stop-color="#555"/><stop offset="1" stop-color="#ddd"/></linearGradient></defs><rect x="1" y="3" width="17" height="12" fill="url(#g2)" stroke="#c8c8c8" stroke-width="1"/></svg>
<div class="t" style="left:1639px;top:540px;font-size:12px;color:#e4e4e4">渐变</div>
<svg style="left:1611px;top:565px" width="20" height="19"><circle cx="7" cy="7" r="6" fill="#c8c8c8"/><circle cx="11" cy="12" r="5.5" fill="#909090" stroke="#c8c8c8" stroke-width="1.5"/></svg>
<div class="t" style="left:1639px;top:568px;font-size:12px;color:#e4e4e4">透...</div>
<div class="a" style="left:1601px;top:590px;width:81px;height:2px;background:#3c3c3c"></div>
<div class="a" style="left:1632px;top:595px;width:19px;height:4px;background:repeating-linear-gradient(90deg,#2e2e2e 0 1px,transparent 1px 2px)"></div>
<svg style="left:1611px;top:606px" width="20" height="19"><circle cx="9" cy="4.5" r="3.8" fill="#c8c8c8"/><circle cx="4.5" cy="10" r="3.8" fill="#c8c8c8"/><circle cx="13.5" cy="10" r="3.8" fill="#c8c8c8"/><path d="M8 9 L10 9 L11 16 L13 17 L5 17 L7 16Z" fill="#c8c8c8"/></svg>
<div class="t" style="left:1639px;top:609px;font-size:12px;color:#e4e4e4">符号</div>
<svg style="left:1611px;top:634px" width="20" height="19"><path d="M4 10 L14 10 L13 18 L5 18Z" fill="#c8c8c8"/><path d="M6 10 L5 3 M9 10 L9 1 M12 10 L14 4" stroke="#c8c8c8" stroke-width="2"/><circle cx="5" cy="3" r="1.6" fill="#c8c8c8"/><circle cx="14" cy="4" r="1.6" fill="#c8c8c8"/></svg>
<div class="t" style="left:1639px;top:637px;font-size:12px;color:#e4e4e4">画笔</div>
<svg style="left:1611px;top:662px" width="20" height="19"><rect x="5" y="1" width="12" height="12" fill="none" stroke="#c8c8c8" stroke-width="1.2"/><rect x="1" y="9" width="6" height="6" fill="#535353" stroke="#c8c8c8" stroke-width="1.2"/><rect x="4" y="12" width="5" height="5" fill="#535353" stroke="#c8c8c8" stroke-width="1.2"/></svg>
<div class="t" style="left:1639px;top:665px;font-size:12px;color:#e4e4e4">图...</div>
<div class="a" style="left:1601px;top:687px;width:81px;height:2px;background:#3c3c3c"></div>
<div class="a" style="left:1632px;top:692px;width:19px;height:4px;background:repeating-linear-gradient(90deg,#2e2e2e 0 1px,transparent 1px 2px)"></div>
<svg style="left:1611px;top:703px" width="20" height="19"><rect x="1" y="1" width="1.2" height="17" fill="#c8c8c8"/><rect x="3.5" y="3" width="8" height="5" fill="#c8c8c8"/><rect x="3.5" y="10" width="13" height="5" fill="#c8c8c8"/></svg>
<div class="t" style="left:1639px;top:706px;font-size:12px;color:#e4e4e4">对齐</div>
<svg style="left:1611px;top:731px" width="20" height="19"><rect x="1" y="1" width="10" height="10" fill="#c8c8c8"/><rect x="4" y="4" width="4" height="4" fill="#535353"/><rect x="6" y="6" width="11" height="11" fill="#c8c8c8"/><rect x="6" y="6" width="5" height="5" fill="#535353"/><rect x="7" y="7" width="3" height="3" fill="#c8c8c8"/></svg>
<div class="t" style="left:1639px;top:734px;font-size:12px;color:#e4e4e4">路...</div>
<div class="a" style="left:1601px;top:756px;width:81px;height:2px;background:#3c3c3c"></div>
<div class="a" style="left:1632px;top:761px;width:19px;height:4px;background:repeating-linear-gradient(90deg,#2e2e2e 0 1px,transparent 1px 2px)"></div>
<svg style="left:1611px;top:772px" width="20" height="19"><rect x="1" y="3" width="17" height="13" fill="#c8c8c8"/><rect x="2.5" y="4.5" width="4" height="4" fill="#777"/><rect x="7.5" y="4.5" width="4" height="4" fill="#777"/><rect x="12.5" y="9.5" width="4" height="5" fill="#999"/><rect x="2.5" y="9.5" width="4" height="5" fill="#999"/><rect x="7.5" y="9.5" width="4" height="5" fill="#999"/><rect x="12.5" y="4.5" width="4" height="4" fill="#999"/></svg>
<div class="t" style="left:1639px;top:775px;font-size:12px;color:#e4e4e4">色板</div>
<svg style="left:1611px;top:800px" width="20" height="19"><path d="M10 2 C16 2 19 5 19 8 C19 11 15 10 14 12 C13 14 16 16 10 16 C4 16 1 13 1 9 C1 5 5 2 10 2Z" fill="#c8c8c8"/><circle cx="5" cy="9" r="1.5" fill="#535353"/><circle cx="8" cy="5.5" r="1.5" fill="#535353"/><circle cx="13" cy="5" r="1.5" fill="#535353"/><circle cx="8" cy="12.5" r="1.5" fill="#535353"/></svg>
<div class="t" style="left:1639px;top:803px;font-size:12px;color:#e4e4e4">颜色</div>
<svg style="left:1611px;top:828px" width="20" height="19"><path d="M2 17 L2 2 C10 2 16 9 17 17Z" fill="#c8c8c8"/><path d="M2 17 L8 4 M2 17 L12 7 M2 17 L15 11" stroke="#999" stroke-width="1"/></svg>
<div class="t" style="left:1639px;top:831px;font-size:12px;color:#e4e4e4">颜...</div>
<div class="a" style="left:1601px;top:853px;width:81px;height:2px;background:#3c3c3c"></div>
<div class="a" style="left:1601px;top:81px;width:1px;height:774px;background:#4a4a4a"></div>
</div>
<!-- LAYERS PANEL -->
<div class="a" style="left:1685px;top:81px;width:230px;height:954px;background:#535353"></div>
<div class="a" style="left:1915px;top:68px;width:5px;height:967px;background:#3a3a3a"></div>
<div id="layers">
<div class="t" style="left:1901px;top:72px;font-size:0"></div>
<svg style="left:1901px;top:72px" width="10" height="7"><path d="M1 0.5 L4.5 3.5 L1 6.5Z M5.5 0.5 L9 3.5 L5.5 6.5Z" fill="#ccc"/></svg>
<svg style="left:1668px;top:72px" width="9" height="6"><path d="M8 0.3 L5 3 L8 5.7Z M4 0.3 L1 3 L4 5.7Z" fill="#d0d0d0"/></svg>
<div class="a" style="left:1685px;top:81px;width:230px;height:6px;background:#434343"></div>
<div class="a" style="left:1685px;top:81px;width:42px;height:6px;background:#474747"></div>
<div class="a" style="left:1728px;top:81px;width:41px;height:6px;background:#454545"></div>
<div class="a" style="left:1770px;top:81px;width:42px;height:6px;background:#535353"></div>
<div class="a" style="left:1685px;top:87px;width:230px;height:20px;background:#535353"></div>
<div class="a" style="left:1896px;top:87px;width:16px;height:15px;border:1px solid #5c5c5c;border-radius:3px;background:#4e4e4e"></div>
<svg style="left:1899px;top:90px" width="10" height="9"><path d="M0 1 H10 M0 3.5 H10 M0 6 H10 M0 8.5 H10" stroke="#ddd" stroke-width="1"/></svg>
<div class="a" style="left:1690px;top:107px;width:220px;height:909px;border:1px solid #5e5e5e;border-radius:3px;background:#535353"></div>
<div class="a" style="left:1691px;top:115px;width:218px;height:20px;background:#4f6582"></div>
<svg style="left:1902px;top:115px" width="7" height="7"><path d="M0 0 L7 0 L7 7Z" fill="#ddd"/></svg>
<div class="a" style="left:1691px;top:156px;width:218px;height:1px;background:#5c5c5c"></div>
<div class="a" style="left:1691px;top:177px;width:218px;height:1px;background:#5c5c5c"></div>
<div class="a" style="left:1691px;top:198px;width:218px;height:1px;background:#5c5c5c"></div>
<div class="a" style="left:1691px;top:219px;width:218px;height:1px;background:#5c5c5c"></div>
<div class="t" style="left:1690px;top:1020px;font-size:11.5px;color:#cfcfcf">5&nbsp;&nbsp;图层</div>
<svg style="left:1745px;top:1019px" width="14" height="13"><path d="M6 2 L1 2 L1 12 L12 12 L12 8 M7 7 L13 1 M9 1 L13 1 L13 5" stroke="#777" stroke-width="1.2" fill="none"/></svg>
<svg style="left:1771px;top:1019px" width="14" height="14"><circle cx="8.5" cy="5.5" r="4.5" stroke="#777" stroke-width="1.4" fill="none"/><path d="M5.5 8.5 L1 13" stroke="#777" stroke-width="1.8"/></svg>
<svg style="left:1797px;top:1019px" width="13" height="13"><rect x="1" y="1" width="8" height="8" stroke="#777" fill="none"/><rect x="4" y="4" width="8" height="8" stroke="#777" fill="#6a6a6a"/></svg>
<svg style="left:1821px;top:1019px" width="16" height="13"><path d="M1 0 L1 6 L6 6 M3.5 3.5 L6 6 L3.5 8.5" stroke="#ddd" stroke-width="1.4" fill="none"/><path d="M7 3 L15 3 L15 12 L10 12 L10 8 L7 8Z" fill="#ddd"/></svg>
<svg style="left:1851px;top:1019px" width="11" height="13"><path d="M1 1 L10 1 L10 12 L5 12 L5 7 L1 7Z" fill="#ddd"/></svg>
<svg style="left:1876px;top:1019px" width="11" height="14"><path d="M3 1 L8 1 M0.5 2.5 L10.5 2.5" stroke="#ddd" stroke-width="1.2"/><path d="M1.5 4 L9.5 4 L9 13 L2 13Z" stroke="#ddd" stroke-width="1.1" fill="none"/><path d="M4 5.5 L4 11.5 M5.5 5.5 L5.5 11.5 M7 5.5 L7 11.5" stroke="#ddd" stroke-width="0.9"/></svg>
</div>
<!-- CONTEXT MENU -->
<div class="a" style="left:4px;top:67px;width:1912px;height:1px;background:#474747"></div>
<div class="a" style="left:4px;top:68px;width:1912px;height:1px;background:#383838"></div>
<div id="ctx">
<div class="a" style="left:1689px;top:87px;width:206px;height:524px;background:#f2f2f2;box-shadow:2px 2px 3px rgba(0,0,0,0.45)"></div>
<div class="a" style="left:1692px;top:156px;width:200px;height:22px;background:#91c9f7"></div>
<div class="t" style="left:1724px;top:94px;font-size:12px;color:#000;-webkit-text-stroke:0.2px #000">新建图层(N)...</div>
<div class="t" style="left:1724px;top:116px;font-size:12px;color:#000;-webkit-text-stroke:0.2px #000">新建子图层(B)...</div>
<div class="t" style="left:1724px;top:138px;font-size:12px;color:#000;-webkit-text-stroke:0.2px #000">复制“图层 1”(C)</div>
<div class="t" style="left:1724px;top:160px;font-size:12px;color:#000;-webkit-text-stroke:0.2px #000">删除“图层 1”(D)</div>
<div class="a" style="left:1720px;top:181px;width:172px;height:1px;background:#d0d0d0"></div>
<div class="t" style="left:1724px;top:189px;font-size:12px;color:#000;-webkit-text-stroke:0.2px #000">“图层 1”的选项(O)...</div>
<div class="a" style="left:1720px;top:210px;width:172px;height:1px;background:#d0d0d0"></div>
<div class="t" style="left:1724px;top:218px;font-size:12px;color:#7c7c7c">建立/释放剪切蒙版(S)</div>
<div class="t" style="left:1724px;top:240px;font-size:12px;color:#000;-webkit-text-stroke:0.2px #000">进入隔离模式(I)</div>
<div class="t" style="left:1724px;top:262px;font-size:12px;color:#7c7c7c">退出隔离模式(X)</div>
<div class="a" style="left:1720px;top:283px;width:172px;height:1px;background:#d0d0d0"></div>
<div class="t" style="left:1724px;top:291px;font-size:12px;color:#7c7c7c">定位对象(E)</div>
<div class="a" style="left:1720px;top:312px;width:172px;height:1px;background:#d0d0d0"></div>
<div class="t" style="left:1724px;top:320px;font-size:12px;color:#7c7c7c">合并所选图层(M)</div>
<div class="t" style="left:1724px;top:342px;font-size:12px;color:#000;-webkit-text-stroke:0.2px #000">拼合图稿(F)</div>
<div class="t" style="left:1724px;top:364px;font-size:12px;color:#000;-webkit-text-stroke:0.2px #000">收集到新图层中(W)</div>
<div class="a" style="left:1720px;top:385px;width:172px;height:1px;background:#d0d0d0"></div>
<div class="t" style="left:1724px;top:393px;font-size:12px;color:#000;-webkit-text-stroke:0.2px #000">释放到图层(顺序)(Q)</div>
<div class="t" style="left:1724px;top:415px;font-size:12px;color:#000;-webkit-text-stroke:0.2px #000">释放到图层(累积)(Y)</div>
<div class="t" style="left:1724px;top:437px;font-size:12px;color:#7c7c7c">反向顺序(V)</div>
<div class="a" style="left:1720px;top:458px;width:172px;height:1px;background:#d0d0d0"></div>
<div class="t" style="left:1724px;top:466px;font-size:12px;color:#000;-webkit-text-stroke:0.2px #000">模板(T)</div>
<div class="t" style="left:1724px;top:488px;font-size:12px;color:#000;-webkit-text-stroke:0.2px #000">隐藏其它图层(H)</div>
<div class="t" style="left:1724px;top:510px;font-size:12px;color:#000;-webkit-text-stroke:0.2px #000">轮廓化其它图层(U)</div>
<div class="t" style="left:1724px;top:532px;font-size:12px;color:#000;-webkit-text-stroke:0.2px #000">锁定其它图层(L)</div>
<div class="a" style="left:1720px;top:553px;width:172px;height:1px;background:#d0d0d0"></div>
<div class="t" style="left:1724px;top:561px;font-size:12px;color:#000;-webkit-text-stroke:0.2px #000">粘贴时记住图层(R)</div>
<div class="a" style="left:1720px;top:582px;width:172px;height:1px;background:#d0d0d0"></div>
<div class="t" style="left:1724px;top:590px;font-size:12px;color:#000;-webkit-text-stroke:0.2px #000">面板选项(P)...</div>
<svg style="left:0;top:0" width="1920" height="1035"><rect x="1688.3" y="156.3" width="186.2" height="22.2" fill="none" stroke="#e3141e" stroke-width="2.6"/></svg>
<svg style="left:0;top:0" width="1920" height="1035"><path d="M1613 102 L1659 141" stroke="#e8202a" stroke-width="2.8" stroke-linecap="round"/><path d="M1668.5 149.5 L1654 145.5 L1663.5 135.5Z" fill="#e8202a"/></svg>
</div>
</body></html>
